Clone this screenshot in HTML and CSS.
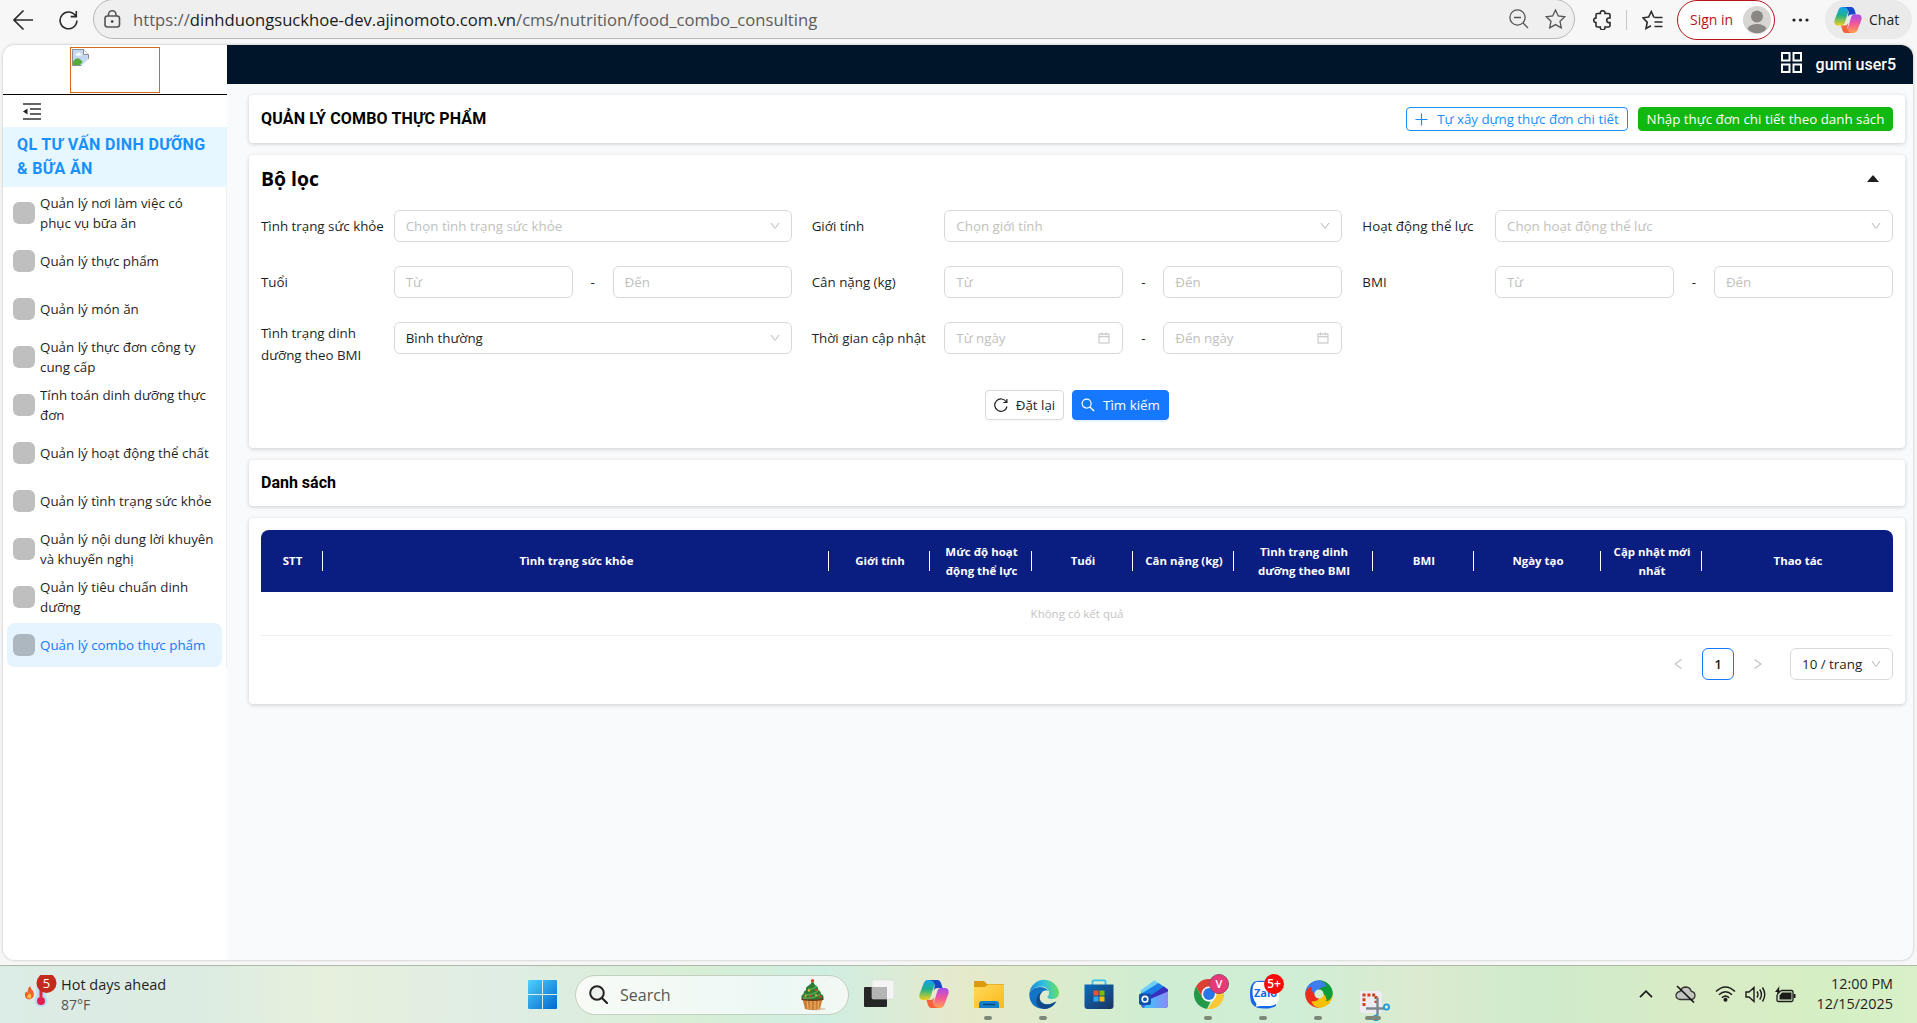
FILE: index.html
```html
<!DOCTYPE html>
<html lang="vi">
<head>
<meta charset="utf-8">
<title>Quản lý combo thực phẩm</title>
<link rel="stylesheet" href="styles.css">
</head>
<body>
<svg class="defs" width="0" height="0">
  <defs>
    <linearGradient id="cp-a" x1="0" y1="0" x2="0" y2="1"><stop offset="0" stop-color="#18a0f0"/><stop offset=".45" stop-color="#1fb08c"/><stop offset="1" stop-color="#f2cf1c"/></linearGradient>
    <linearGradient id="cp-b" x1="0" y1="0" x2="0" y2="1"><stop offset="0" stop-color="#a44cf0"/><stop offset=".5" stop-color="#f2579a"/><stop offset="1" stop-color="#ffa24a"/></linearGradient>
    <linearGradient id="win" x1="0" y1="0" x2="1" y2="1"><stop offset="0" stop-color="#4fd0fc"/><stop offset="1" stop-color="#0068cf"/></linearGradient>
    <linearGradient id="fold" x1="0" y1="0" x2="1" y2="1"><stop offset="0" stop-color="#ffd95a"/><stop offset="1" stop-color="#fbb91c"/></linearGradient>
    <linearGradient id="edge-a" x1="0" y1=".5" x2="1" y2=".4"><stop offset="0" stop-color="#1a86d4"/><stop offset=".5" stop-color="#2fc0e0"/><stop offset="1" stop-color="#6ae05a"/></linearGradient>
    <linearGradient id="store" x1="0" y1="0" x2="1" y2="1"><stop offset="0" stop-color="#0a6cbc"/><stop offset="1" stop-color="#1c3562"/></linearGradient>
    <linearGradient id="out" x1="0" y1="0" x2="1" y2="0"><stop offset="0" stop-color="#3bc8fa"/><stop offset="1" stop-color="#8a8af8"/></linearGradient>
    <symbol id="copilot" viewBox="0 0 30 28">
      <path d="M20 0H9C6 0 5 2 4 5L.6 14c-1 3.500.6 6 3.400 6h4c2 0 3-1 3.600-3l3.600-11.500C16 3 17.500 1.500 20 0z" fill="url(#cp-a)"/>
      <path d="M9 0h9c2.500 0 3.500 1.500 4.200 3.600L23.500 8H19c-2.500 0-3.500 1-4.200 3l.8-5C16 3 14 0 9 0z" fill="#1848c8"/>
      <path d="M10 28h11c3 0 4-2 5-5l3.400-9c1-3.500-.6-6-3.400-6h-4c-2 0-3 1-3.600 3l-3.600 11.500C14 25 12.500 26.500 10 28z" fill="url(#cp-b)"/>
      <path d="M21 28h-8c-2.500 0-3.500-1.500-4.200-3.600L7.500 20H11c2.500 0 3.500-1 4.200-3l-.8 5C14 25 16 28 21 28z" fill="#f5623c"/>
    </symbol>
    <symbol id="down" viewBox="0 0 1024 1024"><path d="M884 256h-75c-5.100 0-9.900 2.500-12.900 6.600L512 654.200 227.900 262.600c-3-4.100-7.800-6.600-12.900-6.600h-75c-6.500 0-10.300 7.400-6.500 12.700l352.600 486.100c12.800 17.600 39 17.600 51.700 0l352.600-486.100c3.900-5.300.1-12.700-6.400-12.700z"/></symbol>
    <symbol id="calendar" viewBox="0 0 1024 1024"><path d="M880 184H712v-64c0-4.400-3.600-8-8-8h-56c-4.400 0-8 3.600-8 8v64H384v-64c0-4.400-3.600-8-8-8h-56c-4.400 0-8 3.600-8 8v64H144c-17.700 0-32 14.300-32 32v664c0 17.700 14.300 32 32 32h736c17.700 0 32-14.300 32-32V216c0-17.700-14.300-32-32-32zm-40 656H184V460h656v380zM184 392V256h128v48c0 4.400 3.600 8 8 8h56c4.400 0 8-3.600 8-8v-48h256v48c0 4.400 3.600 8 8 8h56c4.400 0 8-3.600 8-8v-48h128v136H184z"/></symbol>
  </defs>
</svg>

<div class="toolbar">
  <svg class="i-back" width="20" height="20" viewBox="0 0 20 20"><path d="M20 10H1M10.500 .5L1 10l9.500 9.500"/></svg>
  <svg class="i-reload" width="19" height="20" viewBox="0 0 19 20"><path d="M16.800 6.200A8.400 8.400 0 1 0 17.900 10.500M17.300 1v5.600h-5.600"/></svg>
  <div class="address">
    <svg class="i-lock" width="17" height="18" viewBox="0 0 17 18"><rect x="1" y="6" width="14.500" height="11" rx="2.500"/><path d="M4.500 6V4.500a3.700 3.700 0 0 1 7.500 0V6"/><circle class="dot" cx="8.200" cy="11.500" r="1.300"/></svg>
    <span class="url">https://<b>dinhduongsuckhoe-dev.ajinomoto.com.vn</b>/cms/nutrition/food_combo_consulting</span>
    <svg class="i-grey" width="20" height="20" viewBox="0 0 20 20"><circle cx="8.500" cy="8.500" r="7.600"/><path d="M14 14l5 5M5 8.500h7"/></svg>
    <svg class="i-grey i-star" width="21" height="20" viewBox="0 0 21 20"><path d="M10.500 1l2.800 6 6.500.8-4.800 4.500 1.300 6.600-5.800-3.300-5.800 3.300L6 12.300 1.200 7.800 7.700 7z"/></svg>
  </div>
  <svg class="i-ext" width="20" height="20" viewBox="0 0 20 20"><path d="M4.500 3.500h2.800a2.400 2.400 0 1 1 4.700 0H15.500q1.500 0 1.500 1.500V8h-1a2.300 2.300 0 1 0 0 4.600h1V15.500q0 1.500-1.500 1.500H12a2.400 2.400 0 1 1-4.700 0H4.500Q3 17 3 15.500V12.600a2.300 2.300 0 1 1 0-4.600V5q0-1.500 1.500-1.500z"/></svg>
  <i class="bar-sep"></i>
  <svg class="i-fav" width="21" height="20" viewBox="0 0 21 20"><path d="M12 7.500L9.300 1.500 6.600 7 1 7.800l4.200 4.400L4 18.500l5-2.700M12.500 7.500H20.500M12.500 12H20.500M12.500 16.500H20.500"/></svg>
  <div class="signin"><span>Sign in</span>
    <svg width="28" height="28" viewBox="0 0 28 28"><circle cx="14" cy="14" r="14" fill="#d8d6d2"/><circle cx="14" cy="10.500" r="6" fill="#8a8784"/><path d="M4.500 22.500Q7 18 14 18t9.500 4.500Q20 27.300 14 27.300T4.500 22.500z" fill="#8a8784"/></svg>
  </div>
  <svg class="i-more" width="17" height="4" viewBox="0 0 17 4"><circle cx="2" cy="2" r="1.600"/><circle cx="8.500" cy="2" r="1.600"/><circle cx="15" cy="2" r="1.600"/></svg>
  <div class="chat"><svg width="28" height="26"><use href="#copilot"/></svg><span>Chat</span></div>
</div>

<div class="page">
  <aside class="sidebar">
    <div class="logo"><div class="logo-img">
      <svg width="17" height="17" viewBox="0 0 17 17"><path d="M.5 .5h11l5 5v5.500l-6 5.500H.5z" fill="#c4d8f4" stroke="#8a8f94"/><path d="M1 16v-3.500q4-5.500 8-1.500l1.500 2L8 16z" fill="#56ac3a"/><path d="M3.500 6.500q0-2 2-2 1-2 3 0 1.500 0 1.500 2z" fill="#fff"/><path d="M11.500 .5v5h5" fill="#fff" stroke="#8a8f94"/><path d="M17 9.500L9 17h8z" fill="#fff"/></svg>
    </div></div>
    <div class="fold">
      <svg width="18" height="17" viewBox="0 0 18 17"><path d="M0 1h18M7 6h11M7 11h11M0 16h18" stroke="#333" stroke-width="1.600"/><path d="M0 8.500L4.500 5.500v6z" fill="#222"/></svg>
    </div>
    <h2 class="group">QL TƯ VẤN DINH DƯỠNG<br>&amp; BỮA ĂN</h2>
    <nav class="menu">
      <a><i></i><span>Quản lý nơi làm việc có<br>phục vụ bữa ăn</span></a>
      <a><i></i><span>Quản lý thực phẩm</span></a>
      <a><i></i><span>Quản lý món ăn</span></a>
      <a><i></i><span>Quản lý thực đơn công ty<br>cung cấp</span></a>
      <a><i></i><span>Tính toán dinh dưỡng thực<br>đơn</span></a>
      <a><i></i><span>Quản lý hoạt động thể chất</span></a>
      <a><i></i><span>Quản lý tình trạng sức khỏe</span></a>
      <a><i></i><span>Quản lý nội dung lời khuyên<br>và khuyến nghị</span></a>
      <a><i></i><span>Quản lý tiêu chuẩn dinh<br>dưỡng</span></a>
      <a class="active"><i></i><span>Quản lý combo thực phẩm</span></a>
    </nav>
  </aside>

  <div class="main">
    <header class="topbar">
      <svg width="21" height="21" viewBox="0 0 21 21"><path d="M1 1h7.500v7.500H1zM12.500 1H20v7.500h-7.500zM1 12.500h7.500V20H1zM12.500 12.500H20V20h-7.500z" fill="none" stroke="#fff" stroke-width="2"/></svg>
      <span>gumi user5</span>
    </header>
    <div class="content">
      <section class="card head">
        <h1>QUẢN LÝ COMBO THỰC PHẨM</h1>
        <div class="actions">
          <button class="btn outline"><svg width="13" height="13" viewBox="0 0 13 13"><path d="M6.500 .5v12M.5 6.500h12" stroke="#1890ff" stroke-width="1.200"/></svg><span>Tự xây dựng thực đơn chi tiết</span></button>
          <button class="btn green"><span>Nhập thực đơn chi tiết theo danh sách</span></button>
        </div>
      </section>

      <section class="card filter">
        <div class="filter-title"><h3>Bộ lọc</h3><svg width="12" height="7" viewBox="0 0 12 7"><path d="M0 7L5.300 .7q.7-.8 1.400 0L12 7z" fill="#1f1f1f"/></svg></div>
        <div class="fields">
          <div class="field"><label>Tình trạng sức khỏe</label><div class="box ph"><span>Chọn tình trạng sức khỏe</span><svg class="arrow"><use href="#down"/></svg></div></div>
          <div class="field"><label>Giới tính</label><div class="box ph"><span>Chọn giới tính</span><svg class="arrow"><use href="#down"/></svg></div></div>
          <div class="field"><label>Hoạt động thể lực</label><div class="box ph"><span>Chọn hoạt động thể lưc</span><svg class="arrow"><use href="#down"/></svg></div></div>

          <div class="field"><label>Tuổi</label><div class="range"><div class="box ph"><span>Từ</span></div><em>-</em><div class="box ph"><span>Đến</span></div></div></div>
          <div class="field"><label>Cân nặng (kg)</label><div class="range"><div class="box ph"><span>Từ</span></div><em>-</em><div class="box ph"><span>Đến</span></div></div></div>
          <div class="field"><label>BMI</label><div class="range"><div class="box ph"><span>Từ</span></div><em>-</em><div class="box ph"><span>Đến</span></div></div></div>

          <div class="field"><label>Tình trạng dinh<br>dưỡng theo BMI</label><div class="box"><span>Bình thường</span><svg class="arrow"><use href="#down"/></svg></div></div>
          <div class="field"><label>Thời gian cập nhật</label><div class="range"><div class="box ph"><span>Từ ngày</span><svg class="cal"><use href="#calendar"/></svg></div><em>-</em><div class="box ph"><span>Đến ngày</span><svg class="cal"><use href="#calendar"/></svg></div></div></div>
        </div>
        <div class="filter-actions">
          <button class="btn reset"><svg width="14" height="14" viewBox="0 0 14 14"><path d="M12.300 4A6.200 6.200 0 1 0 13 8.500M12.900 1v3.500H9.400" fill="none" stroke="#1f1f1f" stroke-width="1.200"/></svg><span>Đặt lại</span></button>
          <button class="btn primary"><svg width="14" height="14" viewBox="0 0 14 14"><circle cx="5.600" cy="5.600" r="4.500" fill="none" stroke="#fff" stroke-width="1.200"/><path d="M8.900 8.900l4.200 4.200" stroke="#fff" stroke-width="1.400"/></svg><span>Tìm kiếm</span></button>
        </div>
      </section>

      <section class="card list-title"><h1 class="plain">Danh sách</h1></section>

      <section class="card list">
        <div class="thead">
          <div>STT</div><div>Tình trạng sức khỏe</div><div>Giới tính</div><div>Mức độ hoạt<br>động thể lực</div><div>Tuổi</div><div>Cân nặng (kg)</div><div>Tình trạng dinh<br>dưỡng theo BMI</div><div>BMI</div><div>Ngày tạo</div><div>Cập nhật mới<br>nhất</div><div>Thao tác</div>
        </div>
        <div class="empty">Không có kết quả</div>
        <div class="pager">
          <svg class="chev" width="8" height="10" viewBox="0 0 8 10"><path d="M7.500 .5L1 5l6.500 4.500"/></svg>
          <span class="num">1</span>
          <svg class="chev" width="8" height="10" viewBox="0 0 8 10"><path d="M.5 .5L7 5 .5 9.500"/></svg>
          <div class="size"><span>10 / trang</span><svg class="arrow"><use href="#down"/></svg></div>
        </div>
      </section>
    </div>
  </div>
</div>

<footer class="taskbar">
  <div class="weather">
    <svg width="38" height="40" viewBox="0 0 38 40"><path d="M10 11q1 3 3 5 2 4-.5 7-4 3-7-.5-1.500-3.500.5-6l1.500 1.500Q7.500 13 10 11z" fill="#f0622c"/><path d="M9.500 18q3 3 1 5.500-3 .5-3.500-2z" fill="#ffc04a"/><path d="M16.500 8h9v13q3 3 1.500 7-2 4-6 4t-6-4q-1.500-4 1.500-7z" fill="#bcdcf4"/><path d="M19.500 8h3v14h-3z" fill="#d8264c"/><circle cx="21" cy="26" r="4" fill="#e0204c"/><circle cx="26.500" cy="8" r="10" fill="#c42b1c"/></svg>
    <b class="wbadge">5</b>
    <p><span>Hot days ahead</span><small>87°F</small></p>
  </div>

  <div class="apps">
    <svg class="start" width="29" height="29" viewBox="0 0 29 29"><path d="M1 0h13v14H0V1Q0 0 1 0zM15 0h13q1 0 1 1v13H15zM0 15h14v14H1q-1 0-1-1zM15 15h14v13q0 1-1 1H15z" fill="url(#win)"/></svg>
    <div class="search">
      <svg width="19" height="19" viewBox="0 0 19 19"><circle cx="8" cy="8" r="6.800" fill="#edf1ee" stroke="#222" stroke-width="2"/><path d="M13 13l5 5" stroke="#222" stroke-width="2.200" stroke-linecap="round"/></svg>
      <span>Search</span>
      <svg class="cake" width="26" height="32" viewBox="0 0 26 32"><ellipse cx="16" cy="30" rx="9" ry="1.500" fill="#e2cfb8"/><path d="M1 18h21l-3 12q-8 2-15 0z" fill="#c97f35"/><path d="M6 20l1 10M10 20v10.500M14 20v10.500M18 20l-1 10" stroke="#e9ad62" stroke-width="1.300"/><path d="M.5 19h22v2q-11 2-22 0z" fill="#6b3a1c"/><path d="M11.500 2q2 4 5 6 1 2 .5 3 3 1 3 4 3 1 2.500 4-11 3-22 0-.5-3 2-4 0-3 2.500-4-.5-3 2-4Q10 5 11.500 2z" fill="#2d7a35"/><path d="M7 10q5 1 9-3M4 15.500q8 1 14-4.500M2 19q12 1 17-4" stroke="#58a94c" stroke-width="1.500" fill="none"/><g fill="#d9432c"><circle cx="11.500" cy="1.800" r="1.700"/><circle cx="15" cy="11" r="1.300"/><circle cx="9" cy="17" r="1.300"/><circle cx="19" cy="17.500" r="1.200"/></g><g fill="#f3b43c"><circle cx="8" cy="11.500" r="1.200"/><circle cx="4.500" cy="17" r="1"/><circle cx="15" cy="16" r="1"/></g></svg>
    </div>
    <div class="app"><svg width="30" height="30" viewBox="0 0 30 30"><rect x="0" y="8" width="23" height="20" rx="1" fill="#262626"/><rect x="8" y="1" width="22" height="19" rx="1.500" fill="#f4f4f4" stroke="#d8d8d4" stroke-width=".6"/><path d="M8 8h15v12H8z" fill="#b4b4b4"/></svg></div>
    <div class="app"><svg width="30" height="28"><use href="#copilot"/></svg></div>
    <div class="app run"><svg width="30" height="28" viewBox="0 0 30 28"><path d="M0 2q0-1 1-1h9l3 3h16q1 0 1 1v5H0z" fill="#dc9a0e"/><path d="M0 7h11l3-2.500h15q1 0 1 1V27q0 1-1 1H1q-1 0-1-1z" fill="url(#fold)"/><path d="M5 28v-4q0-3 3-3h14q3 0 3 3v4z" fill="#1280cc"/><path d="M9 24.500h12" stroke="#08477c" stroke-width="1.400"/></svg></div>
    <div class="app run"><svg width="30" height="30" viewBox="0 0 30 30"><path d="M.3 14A15 15 0 0 1 30 13.500Q30 20 23 20q-5 0-4.500-2.500 2-1.500 1.500-5Q18 7.500 12 7.500 3 8 .3 14z" fill="url(#edge-a)"/><path d="M.3 14Q3.500 8 11 8q5.500.2 8.300 3.500-3.800-1-6 1.300-5.300 3.500-1.300 9.700Q17 28 27 22.500 22 30 15 30 0 29 .3 14z" fill="#1173c4"/><path d="M13.300 12.800q-5 5-1 11Q17 28 27.500 22.500 23 30 15 30 6 28 7.500 20q1-5 5.800-7.200z" fill="#114a8b"/></svg></div>
    <div class="app"><svg width="30" height="30" viewBox="0 0 30 30"><path d="M8.500 6V2.500q0-1.200 1.200-1.200h10.600q1.200 0 1.200 1.200V6" fill="none" stroke="#3ac0ee" stroke-width="1.800"/><path d="M.5 5.500h29V27q0 3-3 3h-23q-3 0-3-3z" fill="url(#store)"/><path fill="#f2502a" d="M9.500 11.500H14.500v5H9.500z"/><path fill="#7fba00" d="M15.500 11.500h5v5h-5z"/><path fill="#32a8ec" d="M9.500 17.500H14.500v5H9.500z"/><path fill="#ffb902" d="M15.500 17.500h5v5h-5z"/></svg></div>
    <div class="app"><svg width="30" height="30" viewBox="0 0 30 30"><path d="M2 12L14 3q1.500-1 3 0l12 8v15q0 3-3 3H5q-3 0-3-3z" fill="#3f63e8"/><path d="M1.500 11.500L14.500 2q1-.8 2 0l3.500 2.200L3 15.500z" fill="#6cd0fb"/><path d="M2.500 14.500L19.500 4l6 4L9 19z" fill="#1c7fe6"/><path d="M25 7.500l4 3-.3 3L13 23l-5-4z" fill="#3a2fbc"/><path d="M10 20.500L29 12.500V26q0 3-3 3H5z" fill="url(#out)"/><rect x="0" y="14.500" width="12" height="11.500" rx="2" fill="#0f4fae"/><circle cx="6" cy="20.200" r="2.800" fill="none" stroke="#fff" stroke-width="1.600"/></svg></div>
    <div class="app run"><svg width="30" height="30" viewBox="0 0 30 30"><path d="M2 7.500a15 15 0 0 1 26 0H15L8.500 18.700z" fill="#dc4032"/><path d="M2 7.500L8.500 18.700Q11 22.500 15 22.500h1.500L13 30A15 15 0 0 1 2 7.500z" fill="#249a48"/><path d="M28 7.500A15 15 0 0 1 13.500 30l8-11.200Q23.500 13 19 7.500z" fill="#fcc934"/><circle cx="15" cy="15" r="7.500" fill="#fff"/><circle cx="15" cy="15" r="5.900" fill="#2a75ea"/></svg><b class="badge pink">V</b></div>
    <div class="app run"><svg width="30" height="30" viewBox="0 0 30 30"><path d="M4 4Q1 7 1 14q0 9 3 12 3 3.500 11 3.500 8 0 12-2.500l-2-24Q6 0 4 4z" fill="#1467e8"/><path d="M7 3h20q3 1 3 10v6q-1 8-10 8H11q-2 .5-4.500.5Q8 26 7 24q-3.500-4-3.500-11 0-8 3.500-10z" fill="#fff"/></svg><span class="zalo">Zalo</span><b class="badge red">5+</b></div>
    <div class="app run"><svg width="28" height="28" viewBox="0 0 28 28"><g fill="none" stroke-width="9.200"><path d="M4.800 14A9.200 9.200 0 0 1 14 4.800" stroke="#3c7df0"/><path d="M14 4.800A9.200 9.200 0 0 1 23.200 14" stroke="#0d9c38"/><path d="M23.200 14A9.200 9.200 0 0 1 14 23.200" stroke="#f8c000"/><path d="M14 23.200A9.200 9.200 0 0 1 4.800 14" stroke="#ec2c1c"/></g><path id="tail" d="M13.500 .2Q20 1 21.500 7 18 5.500 13.500 9.500z" fill="#3c7df0"/><path d="M13.500 .2Q20 1 21.500 7 18 5.500 13.500 9.500z" fill="#0d9c38" transform="rotate(90 14 14)"/><path d="M13.500 .2Q20 1 21.500 7 18 5.500 13.500 9.500z" fill="#f8c000" transform="rotate(180 14 14)"/><path d="M13.500 .2Q20 1 21.500 7 18 5.500 13.500 9.500z" fill="#ec2c1c" transform="rotate(270 14 14)"/></svg></div>
    <div class="app run wide"><svg class="snip" width="30" height="31" viewBox="0 0 30 31"><rect x="0" y="1" width="22" height="22" rx="2.500" fill="#ececf2"/><path d="M4 16V5h12v8" fill="none" stroke="#d2401a" stroke-width="3" stroke-dasharray="3 1.800"/><path d="M17.500 7.500V25M6 18.500h18" stroke="#7c8690" stroke-width="2.400"/><circle cx="26.500" cy="17" r="2.600" fill="none" stroke="#1c9cdc" stroke-width="1.800"/><circle cx="16" cy="28" r="2.400" fill="none" stroke="#1c9cdc" stroke-width="1.800"/></svg></div>
  </div>

  <div class="tray">
    <svg width="14" height="8" viewBox="0 0 14 8"><path d="M1 7.200L7 1.200l6 6" fill="none" stroke="#1c1c1c" stroke-width="1.700"/></svg>
    <svg class="cloud" width="21" height="18" viewBox="0 0 21 18"><path d="M5 14.500Q1 14 1 10.300 1.300 7 5 6.500 6.500 2 11 2q4 .2 5.300 4.300Q20 7 20 10.500T16 14.500z" fill="#c2c4c0" stroke="#333" stroke-width="1.300"/><path d="M2 1l17 16.500" stroke="#111" stroke-width="1.600"/></svg>
    <svg class="wifi" width="21" height="16" viewBox="0 0 21 16" fill="none" stroke="#1c1c1c" stroke-width="1.500"><path d="M1 5.500q9.500-9 19 0M4 8.800q6.500-6 13 0M6.800 11.800q3.700-3.300 7.400 0"/><circle cx="10.500" cy="13.800" r="1.300" fill="#1c1c1c"/></svg>
    <svg class="spk" width="21" height="17" viewBox="0 0 21 17" fill="none" stroke="#1c1c1c" stroke-width="1.400"><path d="M1 6h3l5-4.500v14L4 11H1zM12 5.500q2 3 0 6M14.700 3.500q3.500 5 0 10M17.500 1.500q4.500 7 0 14"/></svg>
    <svg class="bat" width="21" height="17" viewBox="0 0 21 17"><path d="M6 4.500h10.500q1.500 0 1.500 1.500v8q0 1.500-1.500 1.500h-13Q2 15.500 2 14V9" fill="none" stroke="#1c1c1c" stroke-width="1.300"/><path d="M7 6.500h9.500v7h-12V9.500z" fill="#1c1c1c"/><path d="M18.500 8H20.500v4h-2zM4.500 0L0 6h2.500L1.500 10 7 4.500H4z" fill="#1c1c1c"/></svg>
    <p><span>12:00 PM</span><span>12/15/2025</span></p>
  </div>
</footer>
</body>
</html>
```
FILE: styles.css
```css
* { box-sizing: border-box; }
body { margin: 0; width: 1917px; height: 1023px; overflow: hidden; display: flex; flex-direction: column; background: #f7f7f7; font-family: "Open Sans", "Noto Sans", sans-serif; font-size: 13.35px; color: #1f1f1f; }
h1, h2, h3, p { margin: 0; }
svg { display: block; flex: none; }
.defs { position: absolute; }

/* browser toolbar */
.toolbar { height: 45px; flex: none; display: flex; align-items: center; padding: 0 5px 6px 13px; }
.toolbar > * { flex: none; }
.toolbar svg { fill: none; stroke: #2b2b2b; stroke-width: 1.6; }
.i-reload { margin-left: 26px; }
.address { height: 40px; width: 1482px; margin: -1px 0 0 15px; border: 1px solid #b9b9b9; border-radius: 20px; background: #efefef; display: flex; align-items: center; padding: 0 8px 0 10px; }
.address .dot { fill: #333; stroke: none; }
.address .i-lock, .address .i-grey { stroke: #555; }
.address .i-grey { stroke-width: 1.3; }
.address .i-star { margin-left: 16px; }
.url { flex: 1; margin-left: 12px; font-size: 16.65px; color: #5c5c5c; white-space: nowrap; }
.url b { font-weight: 400; color: #1b1b1b; }
.i-ext { margin-left: 18px; }
.bar-sep { width: 1px; height: 20px; margin: 0 15px 0 13px; background: #c8c8c8; }
.signin { width: 98px; height: 40px; margin-left: 14px; border: 1.5px solid #b5161c; border-radius: 20px; display: flex; align-items: center; justify-content: space-between; padding: 0 3px 0 12px; color: #b5161c; font-size: 14px; white-space: nowrap; background: #fff; }
.signin svg, .chat svg { stroke: none; }
.toolbar .i-more { fill: #222; stroke: none; margin: 0 16px 0 17px; }
.chat { width: 87px; height: 39px; background: #eaeaea; border-radius: 20px; display: flex; align-items: center; gap: 7px; padding-left: 9px; font-size: 14px; }

/* page frame */
.page { flex: none; height: 915px; width: 1910px; margin-left: 3px; display: flex; border-radius: 12px; overflow: hidden; background: #f9fafc; box-shadow: 0 0 2px 1px #d8d8d8; }
.sidebar { width: 224px; flex: none; background: #fff; }
.logo { height: 50px; border-bottom: 1px solid #000; display: flex; justify-content: center; padding-top: 2px; }
.logo-img { width: 90px; height: 46px; border: 1px solid #d2691e; padding: 1px; }
.fold { height: 32px; padding: 8px 20px; }
.group { height: 60px; padding: 6px 14px; background: #e6f7ff; color: #1890ff; font: 700 16px/24px Roboto, sans-serif; letter-spacing: .36px; white-space: nowrap; }
.menu { padding: 4px 4px 0; display: flex; flex-direction: column; gap: 4px; border-right: 1px solid #f0f0f0; }
.menu a { height: 44px; border-radius: 8px; display: flex; align-items: center; gap: 5px; padding-left: 6px; line-height: 20px; white-space: nowrap; }
.menu i { width: 22px; height: 22px; border-radius: 6px; background: #bfbfbf; }
.menu .active { background: #e6f4ff; color: #1677ff; }
.menu .active i { background: #acb7bf; }

.main { flex: 1; min-width: 0; }
.topbar { height: 39px; background: #001529; color: #fff; display: flex; align-items: center; justify-content: flex-end; gap: 14px; padding-right: 17px; font: 500 16px Roboto, sans-serif; }
.topbar svg { margin-bottom: 4px; }
.content { padding: 11px 8px 0 22px; display: flex; flex-direction: column; gap: 12px; }
.card { background: #fff; border-radius: 4px; padding: 0 12px; box-shadow: 0 1px 4px rgba(0, 0, 0, .18); }
.card h1 { font: 700 16px/20px Roboto, sans-serif; letter-spacing: .16px; color: #000; }
.card .plain { letter-spacing: 0; }
.head { height: 48px; display: flex; align-items: center; justify-content: space-between; }
.actions { display: flex; gap: 10px; }
.btn { border: 1px solid; display: flex; align-items: center; justify-content: center; padding: 0; font: inherit; white-space: nowrap; background: #fff; }
.outline { width: 222px; height: 24px; border-color: #1890ff; border-radius: 4px; color: #1890ff; gap: 9px; }
.green { width: 255px; height: 24px; border-color: #10b80f; border-radius: 4px; background: #10b80f; color: #fff; }

.filter { height: 293px; }
.filter-title { height: 55px; display: flex; align-items: center; justify-content: space-between; padding: 0 14px 8px 0; }
.filter-title h3 { font-size: 19.4px; font-weight: 700; color: #000; }
.fields { display: grid; grid-template-columns: repeat(3, 1fr); column-gap: 20px; grid-auto-rows: 56px; }
.field { display: grid; grid-template-columns: 1fr 3fr; align-items: start; }
.field label { min-height: 32px; display: flex; align-items: center; line-height: 22px; white-space: nowrap; }
.box { height: 32px; border: 1px solid #d9d9d9; border-radius: 6px; display: flex; align-items: center; justify-content: space-between; padding: 0 10px 0 11px; background: #fff; white-space: nowrap; }
.ph { color: #bfbfbf; }
.range { display: grid; grid-template-columns: 45% 10% 45%; align-items: center; }
.range em { text-align: center; font-style: normal; }
.arrow { width: 12px; height: 12px; fill: #bfbfbf; }
.cal { width: 14px; height: 14px; fill: #bfbfbf; margin-right: 1px; }
.filter-actions { display: flex; justify-content: center; gap: 8px; margin-top: 12px; }
.filter-actions .btn { height: 30px; border-radius: 4px; gap: 8px; }
.reset { width: 79px; border-color: #d9d9d9; color: #1f1f1f; box-shadow: 0 2px 0 rgba(0, 0, 0, .02); }
.primary { width: 97px; background: #1677ff; border-color: #1677ff; color: #fff; box-shadow: 0 2px 0 rgba(5, 145, 255, .1); }

.list-title { height: 46px; display: flex; align-items: center; }
.list { height: 186px; padding-top: 12px; }
.thead { height: 62px; display: grid; grid-template-columns: 62px 506px 101px 102px 101px 101px 139px 101px 127px 101px 191px; background: #0a1d80; border-radius: 8px 8px 0 0; color: #fff; font-size: 11.45px; font-weight: 700; line-height: 19px; text-align: center; white-space: nowrap; }
.thead div { display: flex; align-items: center; justify-content: center; padding: 0 0 1px 1px; background: linear-gradient(#fff, #fff) right center / 1px 20px no-repeat; }
.thead div:last-child { background: none; }
.empty { height: 44px; border-bottom: 1px solid #f0f0f0; display: flex; align-items: center; justify-content: center; color: #c4c4c4; font-size: 11.5px; }
.pager { display: flex; align-items: center; justify-content: flex-end; margin-top: 12px; }
.chev { fill: none; stroke: #bfbfbf; stroke-width: 1.1; }
.num { width: 32px; height: 32px; margin: 0 20px; border: 1px solid #1677ff; border-radius: 6px; text-align: center; line-height: 30px; font-weight: 600; color: #1f1f1f; }
.size { width: 103px; height: 32px; margin-left: 28px; border: 1px solid #d9d9d9; border-radius: 6px; display: flex; align-items: center; justify-content: space-between; padding: 0 10px 0 11px; white-space: nowrap; }

/* taskbar */
.taskbar { flex: none; height: 58px; margin-top: 5px; border-top: 1px solid #adb9a8; display: grid; grid-template-columns: 528px 1fr auto; background: linear-gradient(90deg, #dcece6 0, #dcece2 10%, #e6f0dd 17%, #e0ede4 26%, #d8eed5 36%, #cfeee2 43%, #e6e9cb 50%, #dfebcb 54%, #cfedd2 60%, #d0eed5 68%, #dcead0 74%, #cfebcb 80%, #d9ebc5 89%, #d5efc4 96%, #d9f0c8 100%); }
.weather { position: relative; display: flex; padding: 9px 0 0 20px; }
.weather p { display: flex; flex-direction: column; margin-left: 3px; font-size: 14.5px; line-height: 20px; }
.weather small { font-size: 14px; color: #555; }
.wbadge { position: absolute; left: 36px; top: 7px; width: 21px; text-align: center; color: #fff; font-size: 13px; font-weight: 400; line-height: 20px; }
.apps { display: flex; align-items: center; }
.search { width: 274px; height: 40px; margin: 0 2px 0 18px; border: 1px solid #c3cfc0; border-radius: 20px; background: linear-gradient(90deg, #f8fbf6, #ecf8f5 75%, #f3f8f3); display: flex; align-items: center; padding: 0 21px 0 13px; }
.search span { flex: 1; margin-left: 12px; font-size: 16px; color: #555; }
.app { position: relative; width: 55px; height: 57px; display: flex; align-items: center; justify-content: center; padding-bottom: 1px; }
.app.run::after { content: ""; position: absolute; left: 23px; bottom: 3px; width: 8px; height: 4px; border-radius: 2px; background: #7d8878; }
.app.wide::after { left: 19px; width: 16px; }
.badge { position: absolute; left: 28px; top: 8px; width: 20px; height: 20px; border-radius: 10px; color: #fff; font-size: 11px; font-weight: 600; line-height: 20px; text-align: center; }
.pink { background: #e63a78; border: .5px solid #98416a; line-height: 18px; }
.red { background: #f80a0a; font-size: 12px; }
.zalo { position: absolute; left: 18px; top: 20px; font-size: 11px; line-height: 14px; font-weight: 700; color: #1467e8; }
.snip { margin-top: 22px; margin-left: 2px; }
.tray { display: flex; align-items: center; padding: 0 24px 1px 0; }
.cloud { margin-left: 22px; }
.wifi { margin-left: 19px; }
.spk { margin-left: 9px; }
.bat { margin-left: 9px; }
.tray p { width: 97px; display: flex; flex-direction: column; text-align: right; font-size: 14.4px; line-height: 20px; }
```
